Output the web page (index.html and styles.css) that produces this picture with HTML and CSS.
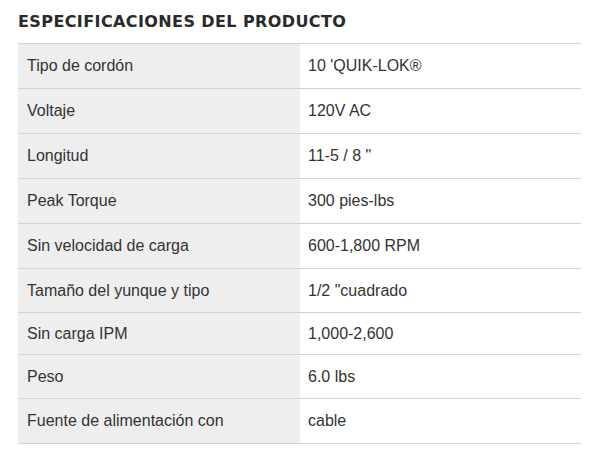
FILE: index.html
```html
<!DOCTYPE html>
<html lang="es">
<head>
<meta charset="utf-8">
<title>Especificaciones del producto</title>
<link rel="stylesheet" href="styles.css">
</head>
<body>
<section class="specs">
  <h2 class="specs-title">ESPECIFICACIONES DEL PRODUCTO</h2>
  <div class="spec-table">
    <div class="spec-row"><div class="spec-name">Tipo de cordón</div><div class="spec-value">10 'QUIK-LOK®</div></div>
    <div class="spec-row"><div class="spec-name">Voltaje</div><div class="spec-value">120V AC</div></div>
    <div class="spec-row"><div class="spec-name">Longitud</div><div class="spec-value">11-5 / 8 "</div></div>
    <div class="spec-row"><div class="spec-name">Peak Torque</div><div class="spec-value">300 pies-lbs</div></div>
    <div class="spec-row"><div class="spec-name">Sin velocidad de carga</div><div class="spec-value">600-1,800 RPM</div></div>
    <div class="spec-row spec-row--mid"><div class="spec-name">Tamaño del yunque y tipo</div><div class="spec-value">1/2 "cuadrado</div></div>
    <div class="spec-row spec-row--short"><div class="spec-name">Sin carga IPM</div><div class="spec-value">1,000-2,600</div></div>
    <div class="spec-row spec-row--mid"><div class="spec-name">Peso</div><div class="spec-value">6.0 lbs</div></div>
    <div class="spec-row"><div class="spec-name">Fuente de alimentación con</div><div class="spec-value">cable</div></div>
  </div>
</section>
</body>
</html>
```

FILE: styles.css
```css
html, body {
  margin: 0;
  padding: 0;
  background: #ffffff;
}

body {
  font-family: "Liberation Sans", Arial, sans-serif;
  color: #333333;
}

.specs {
  padding: 12px 17px 0 18px;
}

.specs-title {
  margin: 0;
  height: 31px;
  font-family: "DejaVu Sans", "Liberation Sans", sans-serif;
  font-size: 16px;
  line-height: 19px;
  font-weight: 700;
  color: #2a2a2a;
  letter-spacing: 0.4px;
}

.spec-table {
  width: 563px;
  border-top: 1px solid #d4d4d4;
}

.spec-row {
  display: grid;
  grid-template-columns: 282px 1fr;
  height: 44px;
  border-bottom: 1px solid #d4d4d4;
  font-size: 16px;
  line-height: 18px;
}

.spec-row--mid {
  height: 43px;
}

.spec-row--short {
  height: 41px;
}

.spec-name,
.spec-value {
  display: flex;
  align-items: center;
}

.spec-name {
  background: #eeeeee;
  padding-left: 9px;
}

.spec-value {
  padding-left: 8px;
  background: #ffffff;
}
```
